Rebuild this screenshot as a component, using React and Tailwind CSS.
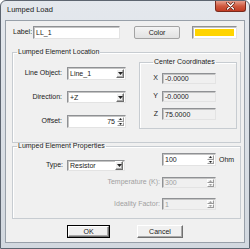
import React from 'react';

const sunken =
  'border border-t-[#8f9194] border-l-[#8f9194] border-r-[#e3e3e3] border-b-[#e3e3e3] shadow-[inset_1px_1px_0_#c4c4c4]';
const raised =
  'border border-t-white border-l-white border-r-[#6f6f6f] border-b-[#6f6f6f] shadow-[inset_-1px_-1px_0_#a9a9a9]';
const spinBtn = 'border border-t-white border-l-white border-r-[#9a9a9a] border-b-[#9a9a9a]';

const Arrow = ({ down, dim, small }) => (
  <svg width={small ? 3 : 5} height={small ? 2 : 3} viewBox="0 0 5 3">
    <path d={down ? 'M0 0h5L2.5 3z' : 'M0 3h5L2.5 0z'} fill={dim ? '#a0a0a0' : '#222'} />
  </svg>
);

const Combo = ({ value, className }) => (
  <div className={`flex items-center bg-white ${sunken} ${className}`}>
    <span className="flex-1 pl-[2px] leading-none">{value}</span>
    <span className={`mr-[1px] flex h-[9px] w-[8px] items-center justify-center bg-[#f0f0f0] ${raised}`}>
      <Arrow down />
    </span>
  </div>
);

const Spin = ({ value, className, disabled, right }) => (
  <div className={`flex ${sunken} ${disabled ? 'bg-[#f0f0f0] text-[#a0a0a0]' : 'bg-white'} ${className}`}>
    <span className={`flex-1 self-center px-[2px] leading-none ${right ? 'text-right' : ''}`}>{value}</span>
    <div className="flex w-[8px] flex-col py-[1px] pr-[1px]">
      <span className={`flex flex-1 items-center justify-center bg-[#f0f0f0] ${spinBtn}`}>
        <Arrow small dim={disabled} />
      </span>
      <span className={`flex flex-1 items-center justify-center bg-[#f0f0f0] ${spinBtn}`}>
        <Arrow small down dim={disabled} />
      </span>
    </div>
  </div>
);

const Coord = ({ label, value, className }) => (
  <div className={`flex h-[11px] items-center ${className}`}>
    <span className="w-[22px] pr-[4px] text-right">{label}</span>
    <div className={`flex h-full w-[54px] items-center bg-[#f0f0f0] pl-[2px] leading-none ${sunken}`}>{value}</div>
  </div>
);

export default function App() {
  return (
    <div className="flex h-[249px] w-[250px] flex-col overflow-hidden rounded-t-[6px] border border-[#5d6570] bg-gradient-to-b from-[#e4e8ed] to-[#d2d8df] font-['Liberation_Sans',Arial,sans-serif] text-[7px] text-[#1a1a1a]">
      {/* title bar */}
      <div className="flex h-[19px] shrink-0 items-start justify-between">
        <span className="mt-[5px] ml-[6px] text-[7.5px] leading-none text-[#1b1b1b]">Lumped Load</span>
        <div className="mr-[3px] flex h-[11px] w-[31px] items-center justify-center rounded-b-[3px] border border-t-0 border-[#7a2a1c] bg-gradient-to-b from-[#e7a08f] via-[#cf5a40] to-[#c23b22]">
          <svg width="9" height="8" viewBox="0 0 9 8">
            <path d="M1.5 1l6 6M7.5 1l-6 6" stroke="#5a1a10" strokeWidth="2.6" strokeLinecap="round" />
            <path d="M1.5 1l6 6M7.5 1l-6 6" stroke="#fff" strokeWidth="1.4" strokeLinecap="round" />
          </svg>
        </div>
      </div>

      {/* client area */}
      <div className="mx-[4px] mb-[5px] flex flex-1 flex-col border border-[#98a0a9] bg-[#f0f0f0]">
        {/* label row */}
        <div className="mt-[5px] flex h-[13px] items-center">
          <span className="ml-[7px] w-[19px]">Label:</span>
          <div className={`ml-[1px] flex h-full w-[87px] items-center bg-white pl-[2px] leading-none ${sunken}`}>LL_1</div>
          <button className="ml-[14px] h-full w-[46px] rounded-[2px] border border-[#a3a3a3] bg-gradient-to-b from-[#f4f4f4] to-[#e2e2e2] leading-none">
            Color
          </button>
          <div className={`ml-[12px] flex h-full w-[45px] bg-white p-[2px] ${sunken}`}>
            <div className="flex-1 bg-[#ffd400]" />
          </div>
        </div>

        {/* Lumped Element Location */}
        <fieldset className="mt-[10px] ml-[6px] h-[94px] w-[229px] border border-[#c7ccd1] shadow-[inset_1px_1px_0_#fff]">
          <legend className="ml-[4px] px-[1px] leading-[6px]">Lumped Element Location</legend>
          <div className="flex">
            <div className="mt-[12px] flex flex-col">
              <div className="flex h-[13px] items-center">
                <span className="w-[49px] text-right">Line Object:</span>
                <Combo value="Line_1" className="ml-[5px] h-full w-[59px]" />
              </div>
              <div className="mt-[11px] flex h-[12px] items-center">
                <span className="w-[49px] text-right">Direction:</span>
                <Combo value="+Z" className="ml-[5px] h-full w-[59px]" />
              </div>
              <div className="mt-[12px] flex h-[13px] items-center">
                <span className="w-[49px] text-right">Offset:</span>
                <Spin value="75" right className="ml-[5px] h-full w-[59px]" />
              </div>
            </div>

            <fieldset className="mt-[4px] ml-[13px] h-[70px] w-[98px] border border-[#c7ccd1] shadow-[inset_1px_1px_0_#fff]">
              <legend className="ml-[13px] px-[1px] leading-[6px]">Center Coordinates</legend>
              <Coord label="X" value="-0.0000" className="mt-[8px]" />
              <Coord label="Y" value="-0.0000" className="mt-[7px]" />
              <Coord label="Z" value="75.0000" className="mt-[6px] h-[12px]" />
            </fieldset>
          </div>
        </fieldset>

        {/* Lumped Element Properties */}
        <fieldset className="ml-[6px] h-[76px] w-[229px] border border-[#c7ccd1] shadow-[inset_1px_1px_0_#fff]">
          <legend className="ml-[4px] px-[1px] leading-[6px]">Lumped Element Properties</legend>
          <div className="mt-[4px] flex items-start">
            <div className="mt-[7px] flex h-[11px] items-center">
              <span className="w-[50px] text-right">Type:</span>
              <Combo value="Resistor" className="ml-[4px] h-full w-[58px]" />
            </div>
            <Spin value="100" className="ml-[37px] h-[13px] w-[54px]" />
            <span className="ml-[3px] mt-[3px] leading-none">Ohm</span>
          </div>
          <div className="mt-[6px] flex h-[11px] items-center text-[#a0a0a0]">
            <span className="w-[147px] text-right">Temperature (K):</span>
            <Spin value="300" disabled className="ml-[2px] h-full w-[54px]" />
          </div>
          <div className="mt-[10px] flex h-[12px] items-center text-[#a0a0a0]">
            <span className="w-[147px] text-right">Ideality Factor:</span>
            <Spin value="1" disabled className="ml-[2px] h-full w-[54px]" />
          </div>
        </fieldset>

        {/* buttons */}
        <div className="mt-[6px] flex h-[13px]">
          <button className="ml-[61px] h-full w-[43px] border border-black bg-[#f0f0f0] p-0 leading-none">
            <span className={`flex h-full w-full items-center justify-center ${raised}`}>OK</span>
          </button>
          <button className={`ml-[27px] h-full w-[46px] bg-[#f0f0f0] leading-none ${raised}`}>Cancel</button>
        </div>
      </div>
    </div>
  );
}
